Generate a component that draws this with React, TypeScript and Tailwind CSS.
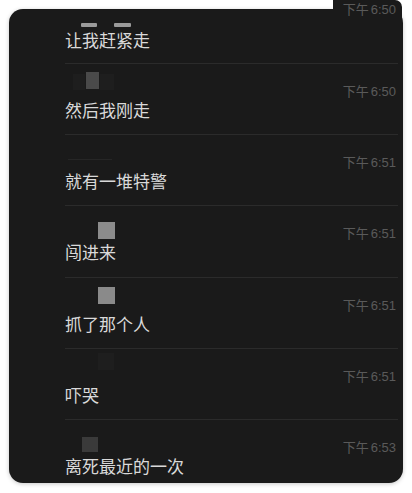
import type { ReactNode } from "react";

const cjk = { fontFamily: '"Noto Sans CJK SC", "Noto Sans", sans-serif' };
const time = { fontFamily: '"Liberation Sans", "Noto Sans CJK SC", sans-serif' };

function Stamp({ children }: { children: string }) {
  return (
    <span className="text-[13px] leading-[13px] text-[#5a5a5a] whitespace-nowrap" style={time}>
      下午<span className="ml-[2px]">{children}</span>
    </span>
  );
}

function Row({
  height,
  stamp,
  name,
  text,
}: {
  height: string;
  stamp: string;
  name: ReactNode;
  text: string;
}) {
  return (
    <div className={`flex flex-col border-t border-[#2b2b2b] ${height}`}>
      <div className="flex h-[34px] items-start justify-between">
        <div className="flex items-start">{name}</div>
        <div className="mt-[14px] pr-[2px]">
          <Stamp>{stamp}</Stamp>
        </div>
      </div>
      <div className="text-[17px] leading-[24px] text-[#d9d9d9]" style={cjk}>
        {text}
      </div>
    </div>
  );
}

export default function App() {
  return (
    <div className="relative h-[493px] w-[412px] overflow-hidden bg-white pl-[9px] pt-[9px]">
      {/* strip of the previous row's time, above the card */}
      <div className="absolute left-[333px] top-0 h-[22px] w-[69px] overflow-hidden rounded-tr-[7px] bg-[#1a1a1a]">
        <div className="-mt-[4px] pr-[6px] text-right">
          <Stamp>6:50</Stamp>
        </div>
      </div>

      <div className="h-[474px] w-[394px] overflow-hidden rounded-[14px] bg-[#1a1a1a] pl-[56px] pr-[5px] shadow-[0_1px_4px_rgba(0,0,0,0.22)]">
        {/* first, clipped row */}
        <div className="flex h-[54px] flex-col">
          <div className="flex h-[19px] items-start">
            <div className="ml-[16px] mt-[14px] h-[4px] w-[16px] rounded-[1px] bg-[#9a9a9a]" />
            <div className="ml-[17px] mt-[14px] h-[4px] w-[17px] rounded-[1px] bg-[#9a9a9a]" />
          </div>
          <div className="text-[17px] leading-[24px] text-[#d9d9d9]" style={cjk}>
            让我赶紧走
          </div>
        </div>

        <Row
          height="h-[71px]"
          stamp="6:50"
          text="然后我刚走"
          name={
            <>
              <div className="ml-[8px] mt-[10px] h-[16px] w-[12px] bg-[#1e1e1e]" />
              <div className="ml-[1px] mt-[8px] h-[17px] w-[13px] bg-[#4a4a4a]" />
              <div className="ml-[1px] mt-[10px] h-[16px] w-[14px] bg-[#1e1e1e]" />
            </>
          }
        />
        <Row
          height="h-[71px]"
          stamp="6:51"
          text="就有一堆特警"
          name={<div className="ml-[3px] mt-[24px] h-[1px] w-[44px] bg-[#262626]" />}
        />
        <Row
          height="h-[72px]"
          stamp="6:51"
          text="闯进来"
          name={<div className="ml-[33px] mt-[16px] h-[17px] w-[17px] bg-[#8c8c8c]" />}
        />
        <Row
          height="h-[71px]"
          stamp="6:51"
          text="抓了那个人"
          name={<div className="ml-[33px] mt-[9px] h-[17px] w-[17px] bg-[#8a8a8a]" />}
        />
        <Row
          height="h-[71px]"
          stamp="6:51"
          text="吓哭"
          name={<div className="ml-[33px] mt-[4px] h-[17px] w-[16px] bg-[#1e1e1e]" />}
        />
        <Row
          height="h-[64px]"
          stamp="6:53"
          text="离死最近的一次"
          name={<div className="ml-[17px] mt-[17px] h-[15px] w-[16px] bg-[#3a3a3a]" />}
        />
      </div>
    </div>
  );
}
